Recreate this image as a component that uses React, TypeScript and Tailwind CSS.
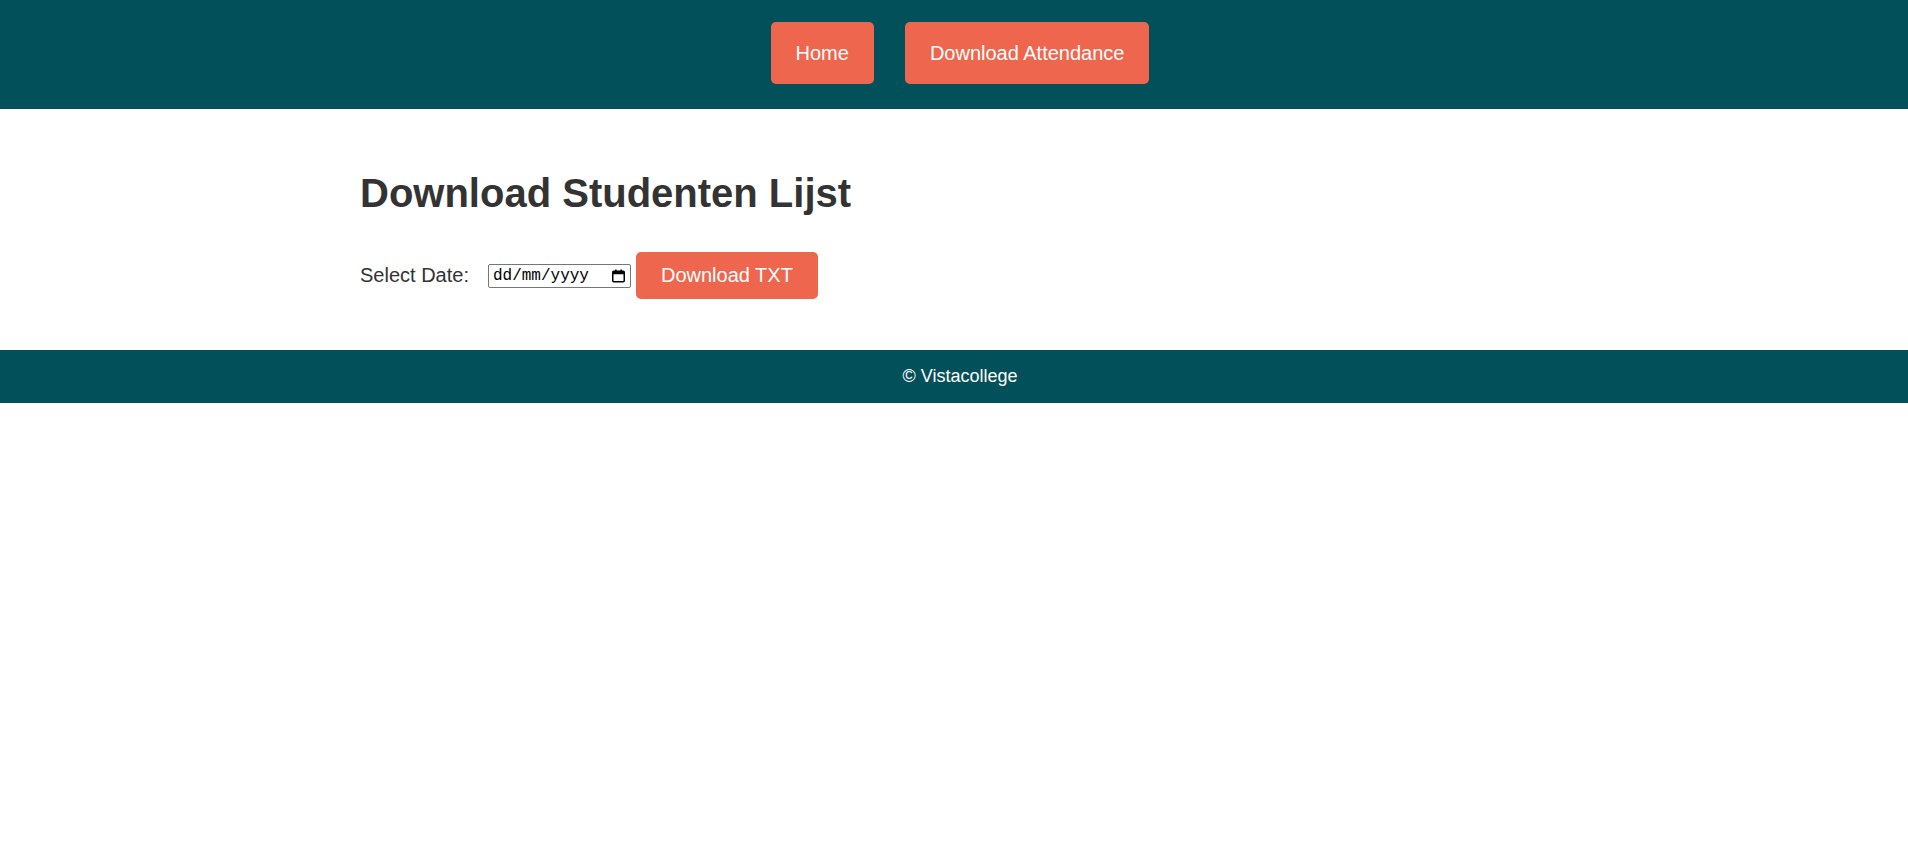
import { useState } from 'react'

function NavButton({ label }: { label: string }) {
  return (
    <a
      href="#"
      className="flex h-[62px] items-center rounded-[5px] bg-[#ee664d] px-[25px] pt-[1px] text-[20px] leading-[23px] text-white"
    >
      {label}
    </a>
  )
}

function CalendarIcon() {
  return (
    <svg width="13" height="14" viewBox="0 0 13 14" className="shrink-0">
      <rect x="3" y="0.5" width="1.6" height="3" fill="#000" />
      <rect x="8.4" y="0.5" width="1.6" height="3" fill="#000" />
      <rect x="0.75" y="2.25" width="11.5" height="10.5" rx="1" fill="none" stroke="#000" strokeWidth="1.5" />
      <rect x="0.75" y="2.25" width="11.5" height="3" fill="#000" />
    </svg>
  )
}

export default function App() {
  const [date, setDate] = useState('')

  return (
    <div className="min-h-[852px] bg-white font-['Liberation_Sans',Arial,sans-serif] text-[#333]">
      <header className="flex justify-center gap-[31px] bg-[#02505a] pb-[25px] pl-[12px] pt-[22px]">
        <NavButton label="Home" />
        <NavButton label="Download Attendance" />
      </header>

      <main className="pl-[12px]">
        <div className="mx-auto w-[1200px] pb-[51px] pt-[61px]">
          <h1 className="text-[40px] font-bold leading-[46px] text-[#333]">Download Studenten Lijst</h1>

          <div className="mt-[36px] flex items-center">
            <label htmlFor="date" className="text-[20px] leading-[23px] text-[#333]">
              Select Date:
            </label>
            {/* date field drawn by hand so it shows dd/mm/yyyy */}
            <div className="ml-[19px] flex h-[24px] w-[143px] items-center rounded-[2px] border border-[#767676] bg-white pl-[4px] pr-[5px]">
              <input
                id="date"
                type="text"
                value={date}
                onChange={(e) => setDate(e.target.value)}
                placeholder="dd/mm/yyyy"
                className="w-[104px] bg-transparent font-['Liberation_Mono',monospace] text-[16px] leading-[20px] text-black outline-none placeholder:text-black"
              />
              <span className="ml-auto flex items-center">
                <CalendarIcon />
              </span>
            </div>
            <button className="ml-[5px] rounded-[5px] bg-[#ee664d] px-[25px] py-[12px] text-[20px] leading-[23px] text-white">
              Download TXT
            </button>
          </div>
        </div>
      </main>

      <footer className="bg-[#02505a] py-[16px] pl-[12px] text-center text-[18px] leading-[21px] text-white">
        © Vistacollege
      </footer>
    </div>
  )
}
